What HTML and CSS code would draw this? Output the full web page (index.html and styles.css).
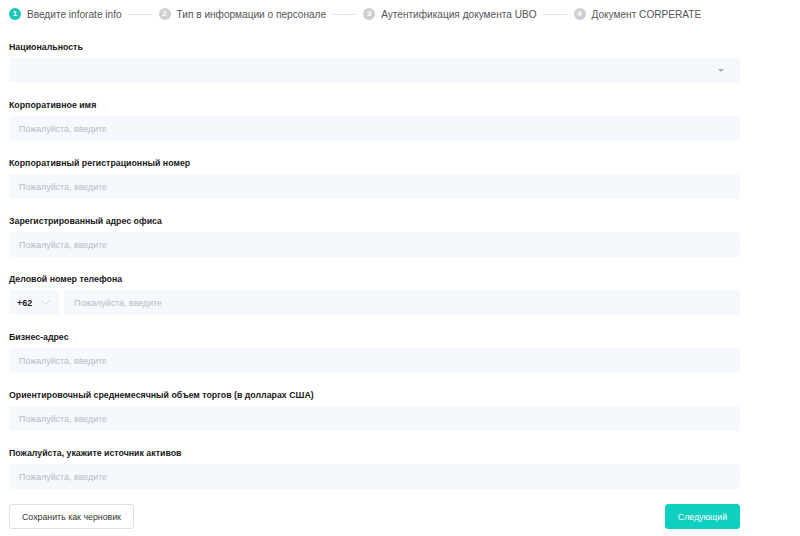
FILE: index.html
```html
<!DOCTYPE html>
<html lang="ru">
<head>
<meta charset="utf-8">
<link rel="stylesheet" href="styles.css">
</head>
<body>
<div class="page">
  <div class="steps">
    <div class="step active"><span class="num">1</span><span class="txt">Введите inforate info</span></div>
    <span class="line"></span>
    <div class="step"><span class="num">2</span><span class="txt">Тип в информации о персонале</span></div>
    <span class="line"></span>
    <div class="step"><span class="num">3</span><span class="txt">Аутентификация документа UBO</span></div>
    <span class="line"></span>
    <div class="step"><span class="num">4</span><span class="txt">Документ CORPERATE</span></div>
  </div>

  <form class="form">
    <div class="field">
      <div class="label">Национальность</div>
      <div class="input select"><span class="caret"></span></div>
    </div>
    <div class="field">
      <div class="label">Корпоративное имя</div>
      <div class="input"><span class="ph">Пожалуйста, введите</span></div>
    </div>
    <div class="field">
      <div class="label">Корпоративный регистрационный номер</div>
      <div class="input"><span class="ph">Пожалуйста, введите</span></div>
    </div>
    <div class="field">
      <div class="label">Зарегистрированный адрес офиса</div>
      <div class="input"><span class="ph">Пожалуйста, введите</span></div>
    </div>
    <div class="field">
      <div class="label">Деловой номер телефона</div>
      <div class="phone">
        <div class="input prefix"><span class="code">+62</span>
          <svg class="chev" width="9" height="5" viewBox="0 0 9 5"><path d="M0.5 0.5 L4.5 4.5 L8.5 0.5" fill="none" stroke="#cdd2da" stroke-width="1"/></svg>
        </div>
        <div class="input grow"><span class="ph">Пожалуйста, введите</span></div>
      </div>
    </div>
    <div class="field">
      <div class="label">Бизнес-адрес</div>
      <div class="input"><span class="ph">Пожалуйста, введите</span></div>
    </div>
    <div class="field">
      <div class="label">Ориентировочный среднемесячный объем торгов (в долларах США)</div>
      <div class="input"><span class="ph">Пожалуйста, введите</span></div>
    </div>
    <div class="field">
      <div class="label">Пожалуйста, укажите источник активов</div>
      <div class="input"><span class="ph">Пожалуйста, введите</span></div>
    </div>
    <div class="actions">
      <button type="button" class="btn draft">Сохранить как черновик</button>
      <button type="button" class="btn next">Следующий</button>
    </div>
  </form>
</div>
</body>
</html>
```

FILE: styles.css
```css
* { box-sizing: border-box; }
html, body { margin: 0; padding: 0; background: #fff; }
body { font-family: "Liberation Sans", Arial, sans-serif; color: #1f1f1f; }

.page { width: 731px; margin-left: 9px; }

.steps { display: flex; align-items: center; height: 28px; }
.step { display: flex; align-items: center; flex: none; }
.num {
  flex: none;
  width: 12px; height: 12px; border-radius: 50%;
  background: #cfcfcf; color: #fff;
  font-size: 8px; font-weight: bold; line-height: 12px; text-align: center;
  margin-right: 6px;
}
.step.active .num { background: #17c9b6; }
.txt { font-size: 10.1px; color: #555; white-space: nowrap; }
.line { flex: none; width: 24px; height: 1px; background: #e3e3e3; margin: 0 7px 0 6px; }

.form { margin-top: 12px; }
.field { margin-bottom: 15px; }
.label { font-size: 8.8px; font-weight: bold; line-height: 14px; margin-bottom: 4px; color: #1a1a1a; }
.input {
  height: 25px; background: #f5f8fd; border-radius: 3px;
  display: flex; align-items: center; padding: 0 10px; position: relative;
}
.ph { font-size: 8.9px; color: #b5bdc9; }
.select { justify-content: flex-end; }
.caret {
  width: 0; height: 0; margin-right: 6px;
  border-left: 3px solid transparent; border-right: 3px solid transparent;
  border-top: 3px solid #a3abb8;
}
.phone { display: flex; gap: 5px; }
.prefix { width: 50px; flex: none; padding: 0 8px; justify-content: space-between; }
.code { font-size: 9px; font-weight: bold; color: #222; }
.chev { margin-right: 1px; }
.grow { flex: 1; }

.actions { display: flex; justify-content: space-between; margin-top: 2px; }
.btn {
  height: 25px; border-radius: 3px; font-family: inherit; font-size: 8.8px;
  padding: 0; cursor: pointer;
}
.draft { width: 125px; background: #fff; border: 1px solid #dcdfe6; color: #333; }
.next { width: 75px; background: #0fcfbf; border: 1px solid #0fcfbf; color: #fff; }
```
